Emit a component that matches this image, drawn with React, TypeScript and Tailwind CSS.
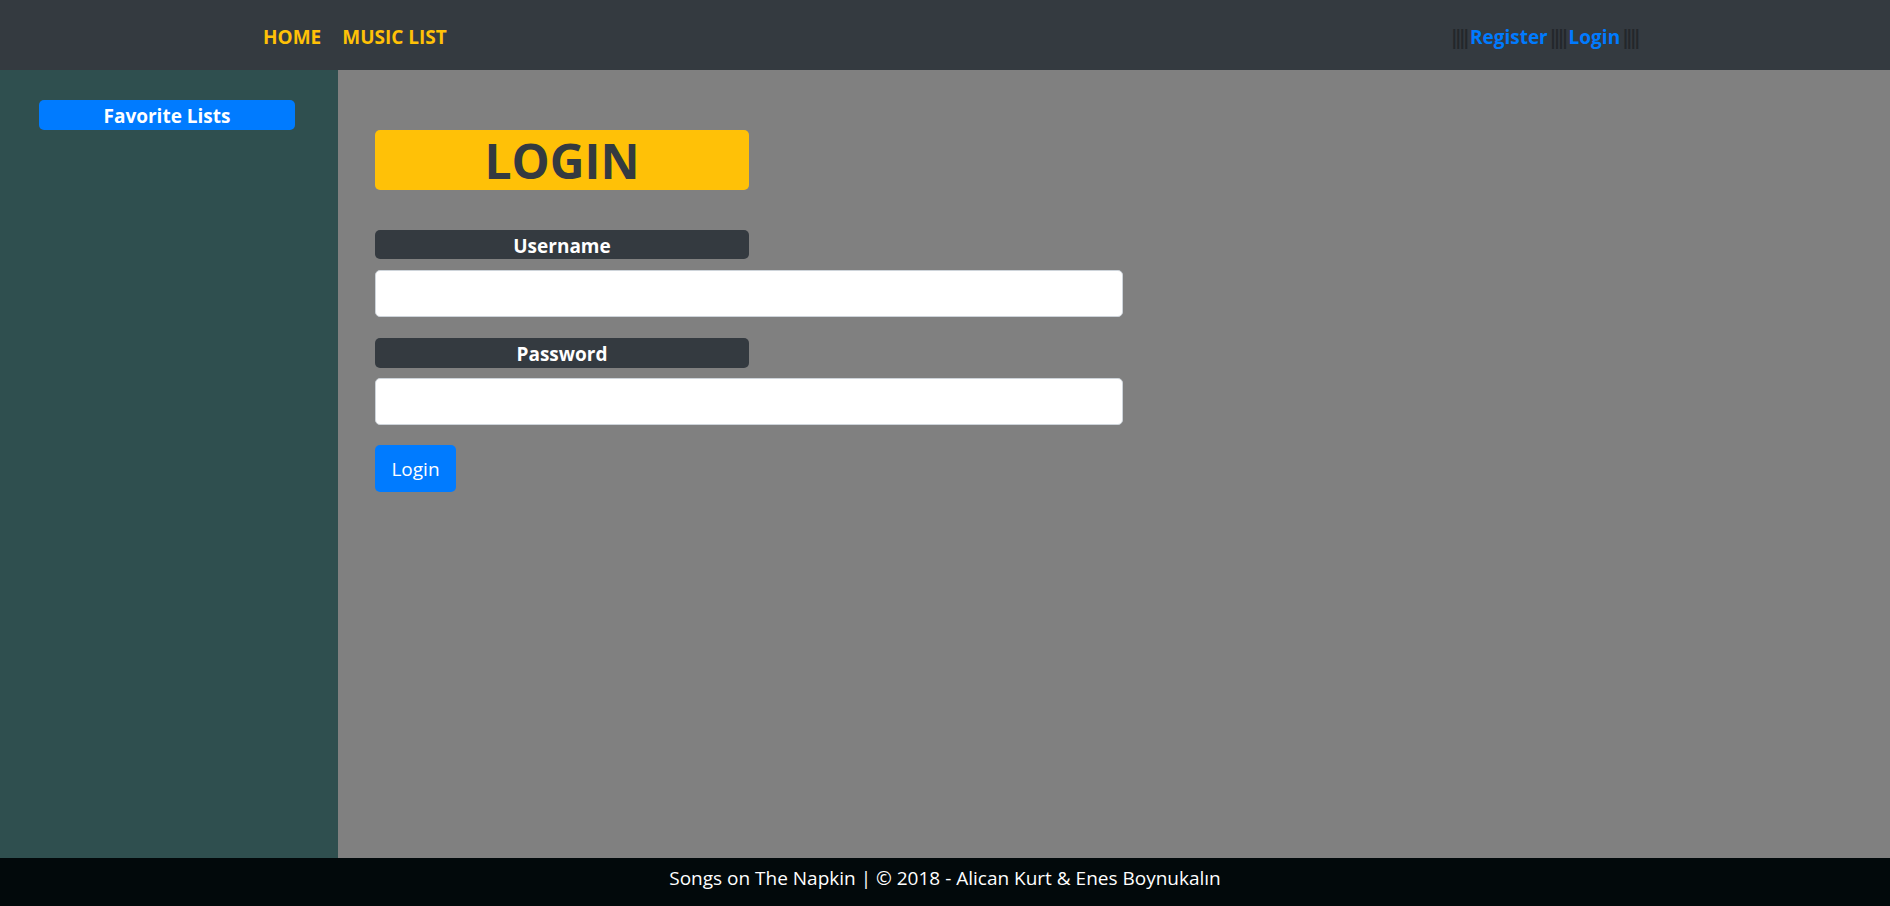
export default function App() {
  return (
    <div className="flex h-[906px] flex-col bg-[#808080] font-['Open_Sans',sans-serif]">
      {/* Top navigation */}
      <nav className="flex h-[70px] shrink-0 items-center justify-between bg-[#343a40] pt-[5px]">
        <div className="ml-[263px] flex items-center gap-[21px] text-[19px] font-bold text-[#ffc107]">
          <a href="#">HOME</a>
          <a href="#">MUSIC LIST</a>
        </div>
        <div className="mr-[249px] flex items-center text-[19px] font-bold">
          <span className="tracking-[-6.5px] pr-[5px] text-[#23272b]">||||</span>
          <a href="#" className="text-[#007bff]">Register</a>
          <span className="tracking-[-6.5px] pr-[5px] text-[#23272b]">||||</span>
          <a href="#" className="text-[#007bff]">Login</a>
          <span className="tracking-[-6.5px] pr-[5px] text-[#23272b]">||||</span>
        </div>
      </nav>

      <div className="flex flex-1">
        {/* Sidebar */}
        <aside className="w-[338px] shrink-0 bg-[#2f4f4f] pt-[30px]">
          <div className="ml-[39px] mr-[43px] flex h-[30px] items-center justify-center rounded-[5px] bg-[#007bff] pt-[2px] text-[19px] font-bold text-white">
            Favorite Lists
          </div>
        </aside>

        {/* Login form */}
        <main className="flex-1 pl-[37px] pt-[60px]">
          <div className="flex h-[60px] w-[374px] items-center justify-center rounded-[5px] bg-[#ffc107] pt-[2px] text-[48px] font-bold text-[#343a40]">
            LOGIN
          </div>

          <div className="mt-[40px] flex h-[29px] w-[374px] items-center justify-center rounded-[5px] bg-[#343a40] pt-[3px] text-[19px] font-bold text-white">
            Username
          </div>
          <input
            type="text"
            className="mt-[11px] block h-[47px] w-[748px] rounded-[5px] border border-[#ced4da] bg-white px-3"
          />

          <div className="mt-[21px] flex h-[30px] w-[374px] items-center justify-center rounded-[5px] bg-[#343a40] pt-[2px] text-[19px] font-bold text-white">
            Password
          </div>
          <input
            type="password"
            className="mt-[10px] block h-[47px] w-[748px] rounded-[5px] border border-[#ced4da] bg-white px-3"
          />

          <button className="mt-[20px] flex h-[47px] w-[81px] items-center justify-center rounded-[5px] bg-[#007bff] pt-[2px] text-[19px] text-white">
            Login
          </button>
        </main>
      </div>

      <footer className="flex h-[48px] shrink-0 items-start justify-center bg-[#02090b] pt-[6px] text-[19px] text-white">
        Songs on The Napkin | © 2018 - Alican Kurt &amp; Enes Boynukalın
      </footer>
    </div>
  );
}
